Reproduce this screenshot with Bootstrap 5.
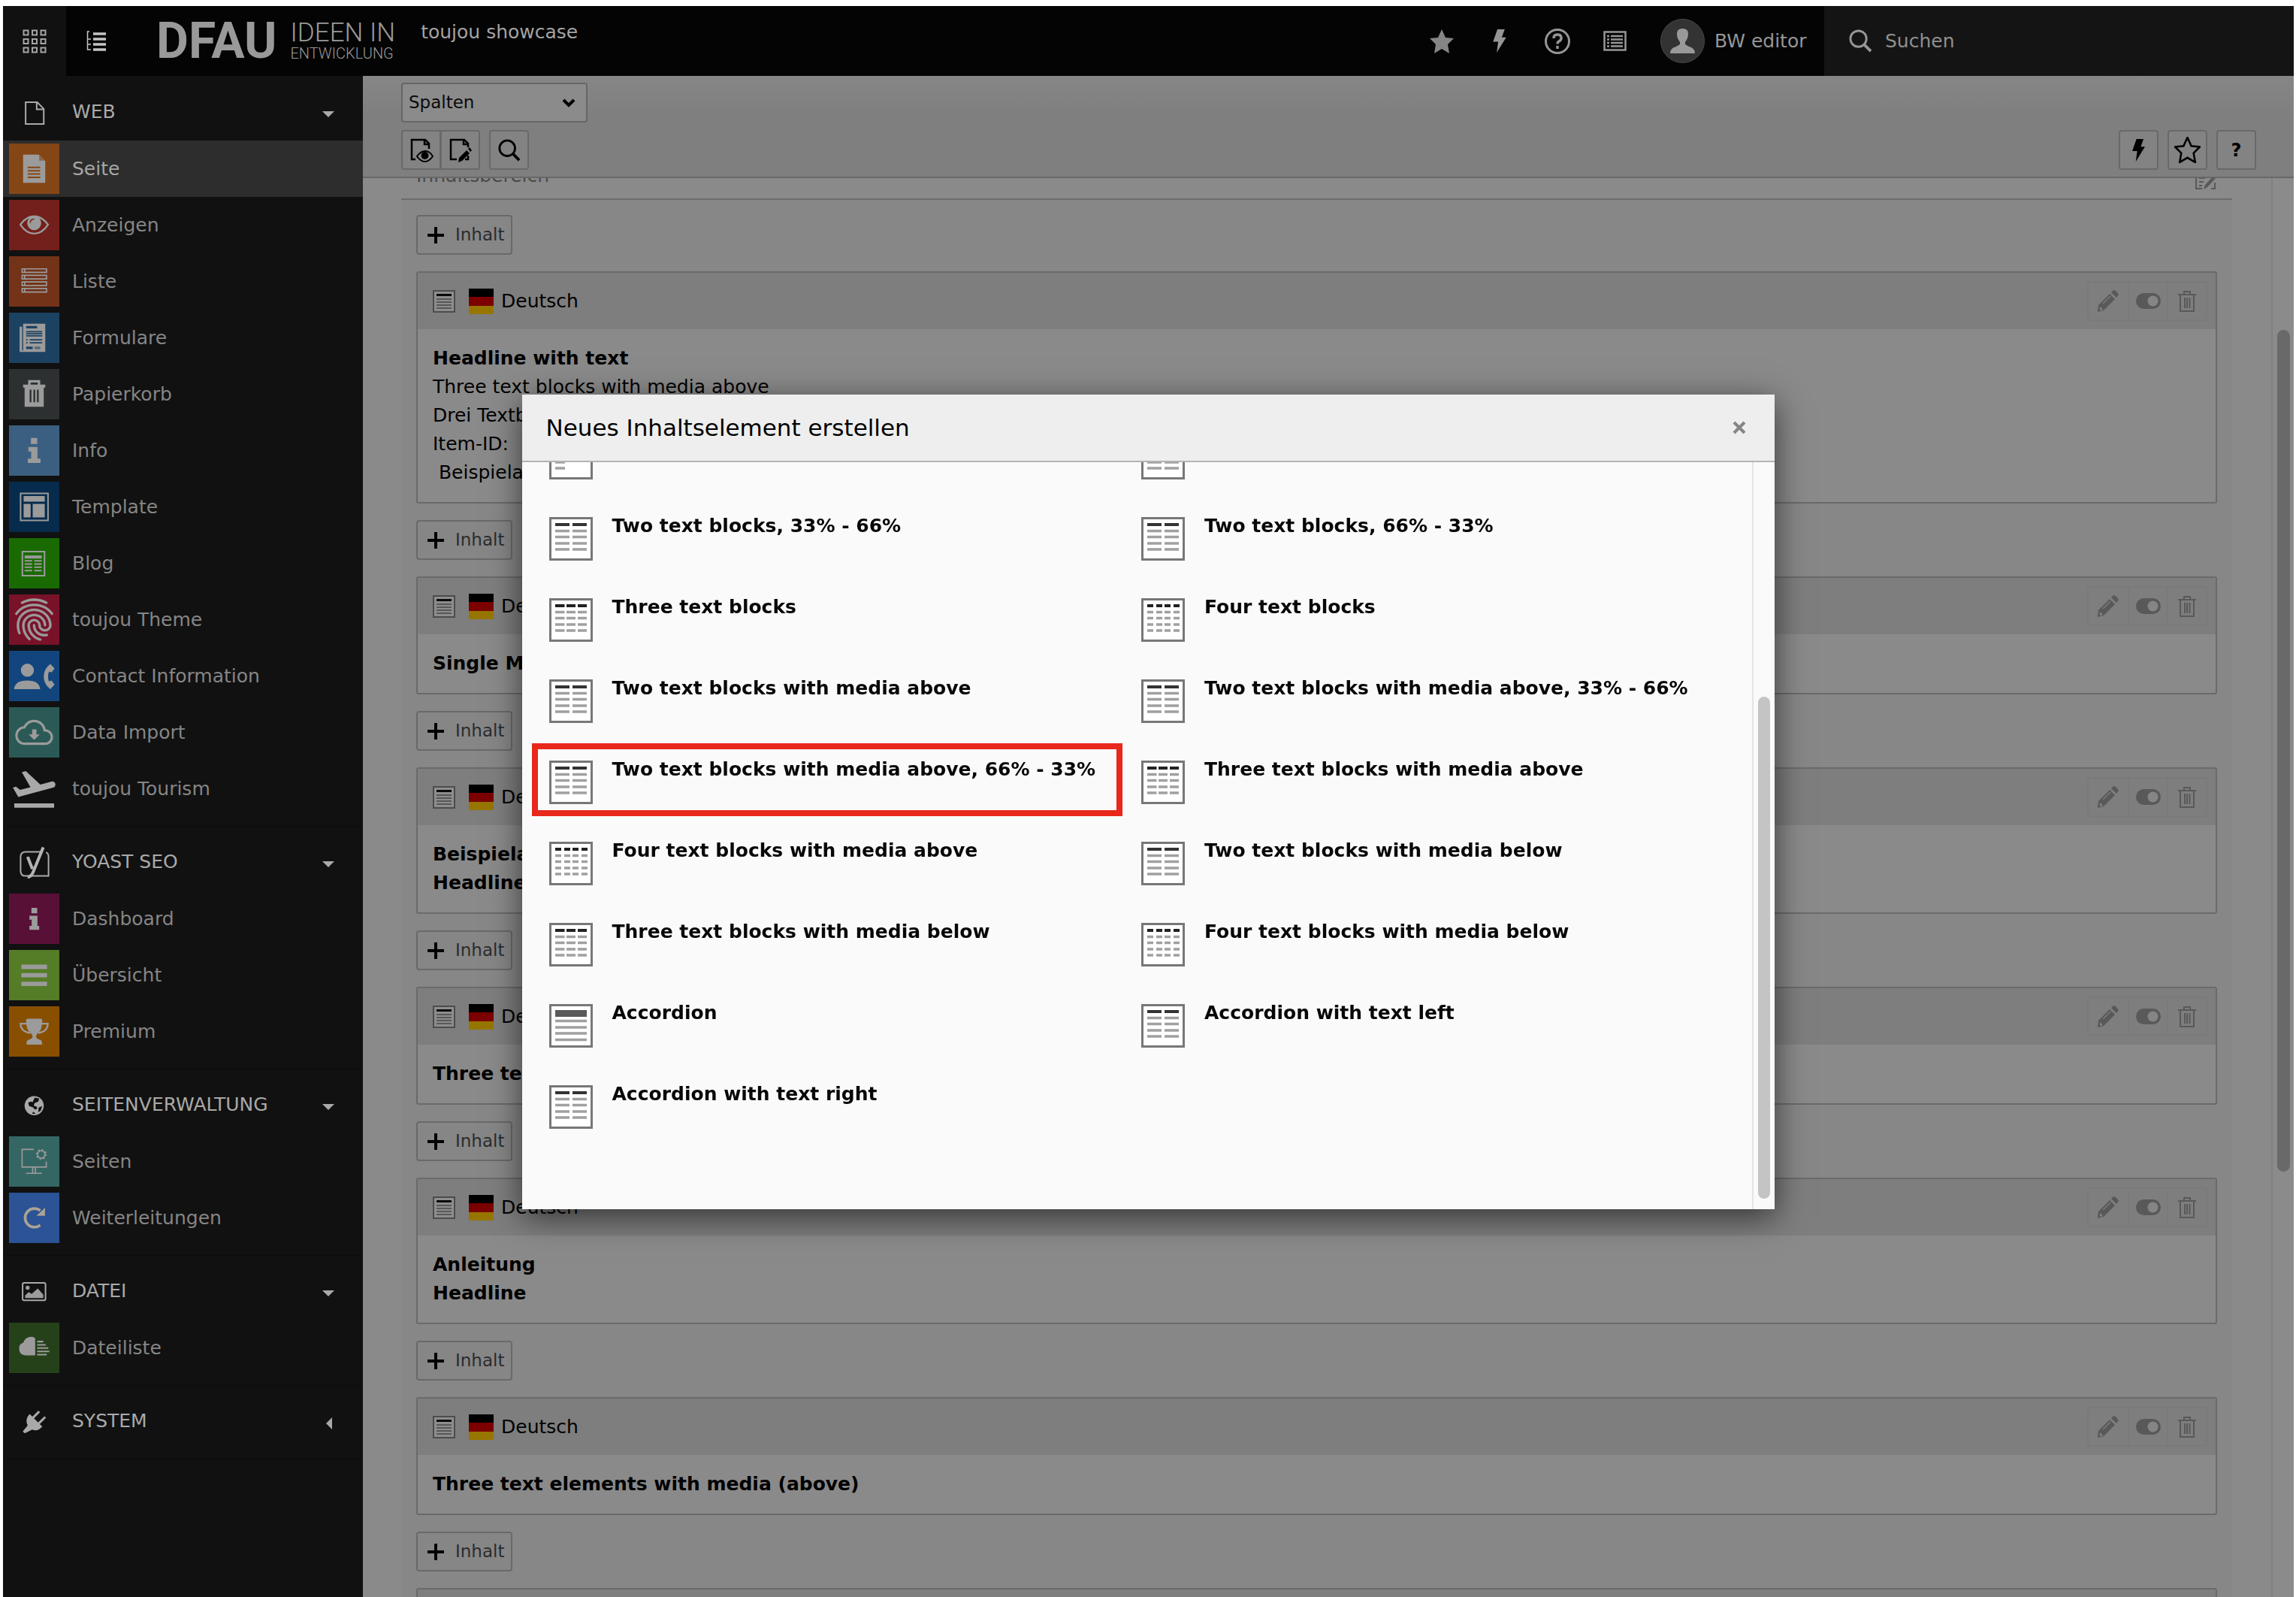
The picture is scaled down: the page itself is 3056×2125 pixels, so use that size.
<!DOCTYPE html>
<html lang="de">
<head>
<meta charset="utf-8">
<meta name="viewport" content="width=device-width, initial-scale=1">
<title>toujou showcase</title>
<link rel="stylesheet" href="https://cdn.jsdelivr.net/npm/bootstrap@5.3.0/dist/css/bootstrap.min.css">
<style>
  html, body { height: 100%; }
  body { font-family: "DejaVu Sans", Verdana, sans-serif; font-size: 25px; line-height: 38px; color: #000; background: #fff; overflow: hidden; }
  svg { display: block; flex: none; }
  .frame { height: 100vh; padding: 8px 3px 0 4px; }

  /* top bar */
  .topbar { height: 93px; flex: none; background: #040404; color: #969696; }
  .topbar button { border: 0; background: none; color: inherit; padding: 0; }
  .topbar .apps-toggle { width: 84px; background: #111; color: #a5a5a5; }
  .topbar .tree-toggle { width: 80px; color: #c4c4c4; }
  .brand { color: #999; text-decoration: none; font-family: Roboto, sans-serif; margin-left: 40px; gap: 18px; }
  .brand-name { font-size: 66px; font-weight: 700; line-height: 66px; }
  .brand-claim { font-size: 35px; font-weight: 300; line-height: 32px; }
  .brand-claim small { font-size: 20px; line-height: 22px; }
  .site-title { margin-left: 34px; color: #a3a3a3; padding-bottom: 24px; }
  .topbar .tool { width: 77px; }
  .topbar .user { width: 240px; gap: 13px; padding-left: 22px; }
  .searchbox { width: 625px; background: #141414; padding-left: 33px; gap: 17px; }
  .searchbox input { background: none; border: 0; padding: 0; color: #969696; font-size: 25px; line-height: 38px; width: 400px; }
  .searchbox input::placeholder { color: #8f8f8f; opacity: 1; }

  /* module menu */
  .modmenu { width: 479px; flex: none; background: #111; overflow: hidden; }
  .modgroup { padding-bottom: 12px; border-bottom: 1px solid #0c0c0c; margin-bottom: -1px; }
  .modhead { width: 100%; height: 86px; padding: 10px 38px 0 8px; border: 0; background: none; color: #a9a9a9; gap: 17px; text-align: left; }
  .modhead .arrow { width: 0; height: 0; margin-top: 6px; border: 8px solid transparent; border-top-color: #a9a9a9; border-bottom: 0; }
  .modhead.closed .arrow { border: 8px solid transparent; border-right-color: #a9a9a9; border-left: 0; margin-right: 3px; }
  .modlink { height: 75px; padding-left: 8px; gap: 17px; color: #858585; text-decoration: none; }
  .modlink.active { background: #2d2d2d; color: #a6a6a6; }
  .modlink:hover { color: #a6a6a6; }
  .tile { width: 67px; height: 67px; fill: #9b9b9b; }

  /* document header */
  .dochead { flex: none; height: 136px; padding: 9px 50px 0 51px; background: linear-gradient(#868686, #7f7f7f 40%, #7f7f7f); border-bottom: 2px solid #686868; gap: 10px; }
  .dochead .form-select { width: 248px; height: 53px; padding: 0 40px 0 8px; border: 2px solid #666; border-radius: 4px; color: #0a0a0a; font-size: 23px;
    background: #8b8b8b url("data:image/svg+xml,%3Csvg xmlns='http://www.w3.org/2000/svg' viewBox='0 0 18 12'%3E%3Cpath d='M2 2l7 7 7-7' fill='none' stroke='%23000' stroke-width='4'/%3E%3C/svg%3E") no-repeat right 14px center / 18px 12px; }
  .tbtn { width: 53px; height: 53px; padding: 0; border: 2px solid #696969; border-radius: 4px; background: #838383; color: #000; font-size: 24px; font-weight: 700; }
  .tbtn:hover { background: #7a7a7a; border-color: #696969; }
  .btn-group .tbtn + .tbtn { margin-left: -2px; }

  /* page content */
  .docbody { background: #8a8a8a; overflow: hidden; }
  .colarea { margin: -22px 52px 0 51px; }
  .colhead { padding: 0 20px 11px; border-bottom: 2px solid #6d6d6d; color: #4a4a4a; }
  .collist { padding: 20px 20px 0; background: #878787; gap: 22px; }
  .addbtn { width: 128px; height: 53px; padding: 0 0 0 13px; border: 2px solid #696969; border-radius: 4px; background: #868686; color: #2c2c2c; font-size: 23px; gap: 15px; }
  .ce { border: 2px solid #6a6a6a; border-radius: 3px; background: #8a8a8a; }
  .ce-head { height: 75px; padding: 0 11px 0 20px; background: #7e7e7e; }
  .ce-flag { margin: 0 10px 0 18px; }
  .ce-body { padding: 20px; }
  .ce-tools { border: 2px solid #7a7a7a; border-radius: 4px; }
  .ce-tools button { width: 52px; height: 49px; padding: 0; border: 0; background: none; color: #595959; }
  .ce-tools button + button { border-left: 2px solid #7a7a7a; }
  .rail { width: 30px; flex: none; border-left: 2px solid #808080; background: #8b8b8b; padding: 202px 0 0 6px; }
  .rail div { width: 17px; height: 1120px; border-radius: 9px; background: #696969; }

  /* dialog */
  .modal.wizard { display: block; top: 8px; height: calc(100% - 8px); overflow: hidden; }
  .wizard .modal-dialog { max-width: 1667px; height: 100%; margin: 0 auto; }
  .wizard .modal-content { height: 1084px; border: 0; border-radius: 0; background: #fafafa; box-shadow: 0 10px 40px rgba(0,0,0,.6); }
  .wizard .modal-header { height: 90px; padding: 0 37px 0 32px; background: #eee; border-bottom: 2px solid #b4b4b4; border-radius: 0; flex: none; }
  .wizard .modal-title { font-size: 31px; line-height: 40px; font-weight: 400; }
  .wizard .closebtn { border: 0; background: none; padding: 0; }
  .wizard .modal-body { padding: 0; overflow: hidden; }
  .wizlist { padding: 0 24px 65px 36px; }
  .wizlist button { height: 108px; padding: 0; border: 0; background: none; gap: 26px; font-size: 25px; line-height: 40px; font-weight: 700; text-align: left; color: #080808; white-space: nowrap; }
  .wizlist svg { margin-top: 8px; }
  .marked { position: relative; }
  .marked::after { content: ""; position: absolute; left: -23px; right: 25px; top: -15px; height: 97px; border: 8px solid #e8281b; }
  .wizrail { width: 30px; flex: none; border-left: 2px solid #e4e4e4; padding: 312px 0 0 6px; }
  .wizrail div { width: 16px; height: 668px; border-radius: 8px; background: #c4c4c4; }
</style>
</head>
<body>

<svg width="0" height="0" class="position-absolute">
  <symbol id="sheet" viewBox="0 0 58 58"><path d="M1.500 1.500h55v55h-55z" fill="#fff" stroke="#777" stroke-width="3"/></symbol>
  <symbol id="w2" viewBox="0 0 58 58"><use href="#sheet"/><path d="M8 10h19M31 10h19" stroke="#333" stroke-width="4"/><path d="M8 18.500h19M31 18.500h19M8 26.500h19M31 26.500h19M8 35h19M31 35h19M8 43h19M31 43h19" stroke="#a0a0a0" stroke-width="3.500"/></symbol>
  <symbol id="w3" viewBox="0 0 58 58"><use href="#sheet"/><path d="M8 10h12.500M23 10h12M38 10h12" stroke="#222" stroke-width="4"/><path d="M8 18.500h12.500m2.500 0h12m3 0h12M8 26.500h12.500m2.500 0h12m3 0h12M8 35h12.500m2.500 0h12m3 0h12M8 43h12.500m2.500 0h12m3 0h12" stroke="#a0a0a0" stroke-width="3.500"/></symbol>
  <symbol id="w4" viewBox="0 0 58 58"><use href="#sheet"/><path d="M8 10h8m4 0h8m3 0h8m4 0h8" stroke="#222" stroke-width="4"/><path d="M8 18.500h8m4 0h8m3 0h8m4 0h8M8 26.500h8m4 0h8m3 0h8m4 0h8M8 35h8m4 0h8m3 0h8m4 0h8M8 43h8m4 0h8m3 0h8m4 0h8" stroke="#a0a0a0" stroke-width="3.500"/></symbol>
  <symbol id="wacc" viewBox="0 0 58 58"><use href="#sheet"/><path d="M8 8h42v9H8z" fill="#5a5a5a"/><path d="M8 22.500h42M8 31h42M8 39h42M8 47.500h42" stroke="#a0a0a0" stroke-width="3.500"/></symbol>
  <symbol id="wside" viewBox="0 0 58 58"><use href="#sheet"/><path d="M8 35h13M8 43h13" stroke="#a0a0a0" stroke-width="3.500"/></symbol>
  <symbol id="cel" viewBox="0 0 30 30"><path d="M1 1h28v28H1z" fill="#8d8d8d" stroke="#4c4c4c" stroke-width="2"/><path d="M5 6.500h20" stroke="#0a0a0a" stroke-width="3"/><path d="M5 12h20M5 16h20M5 20h20M5 24h20" stroke="#585858" stroke-width="2"/></symbol>
  <symbol id="flag" viewBox="0 0 33 34"><path d="M0 0h33v12H0z" fill="#000"/><path d="M0 11h33v12H0z" fill="#7c0000"/><path d="M0 23h33v11H0z" fill="#967600"/></symbol>
  <symbol id="plus" viewBox="0 0 22 22"><path d="M11 0v22M0 11h22" stroke="#000" stroke-width="4"/></symbol>
  <symbol id="pencil" viewBox="0 0 30 30"><path d="M1 29l1-9L17 5l7 7L9 27zM19 3l3-3q2 0 4 2l3 4-3 4z" fill="currentColor"/><path d="M4 22l4 4-4 1z" fill="#858585"/><path d="M8 18L18 8" stroke="#7d7d7d" stroke-width="1.500"/></symbol>
  <symbol id="toggle" viewBox="0 0 33 21"><rect width="33" height="21" rx="10.500" fill="currentColor"/><circle cx="22.500" cy="10.500" r="7" fill="#858585"/></symbol>
  <symbol id="bin" viewBox="0 0 24 30"><path d="M0 6h24M8 6V2h8v4M3 6v22h18V6M9 10v14M12 10v14M15.500 10v14" fill="none" stroke="currentColor" stroke-width="2"/></symbol>
  <symbol id="lens" viewBox="0 0 32 32"><circle cx="13" cy="13" r="11" fill="none" stroke="currentColor" stroke-width="3"/><path d="M21 21l9 9" stroke="currentColor" stroke-width="4"/></symbol>
  <symbol id="bolt" viewBox="0 0 18 32"><path d="M6 0h10l-4 11h6L5 32l2-15H0z" fill="currentColor"/></symbol>
  <symbol id="star" viewBox="0 0 34 34"><path d="M17 1l5 11 11 1-8 8 2 12-10-6-10 6 2-12-8-8 11-1z"/></symbol>
</svg>

<div class="frame d-flex flex-column">
  <header class="topbar d-flex align-items-stretch">
    <button class="apps-toggle d-flex align-items-center justify-content-center" aria-label="Module"><svg width="32" height="32" viewBox="0 0 32 32" fill="none" stroke="currentColor" stroke-width="2"><path d="M1.500 1.500h6v6h-6zM13 1.500h6v6h-6zM24.500 1.500h6v6h-6zM1.500 13h6v6h-6zM13 13h6v6h-6zM24.500 13h6v6h-6zM1.500 24.500h6v6h-6zM13 24.500h6v6h-6zM24.500 24.500h6v6h-6z"/></svg></button>
    <button class="tree-toggle d-flex align-items-center justify-content-center" aria-label="Seitenbaum"><svg width="26" height="27" viewBox="0 0 26 27"><path d="M9 4h17M9 11h17M9 18h17M9 25h17" stroke="currentColor" stroke-width="3.500"/><path d="M4 1H1.500v24H6M1.500 11H6M1.500 18H6" fill="none" stroke="currentColor" stroke-width="1.500"/></svg></button>
    <a class="brand d-flex align-items-center" href="#">
      <span class="brand-name">DFAU</span>
      <span class="brand-claim d-flex flex-column"><span>IDEEN IN</span><small>ENTWICKLUNG</small></span>
    </a>
    <div class="site-title d-flex align-items-center">toujou showcase</div>
    <div class="d-flex align-items-stretch ms-auto">
      <button class="tool d-flex align-items-center justify-content-center" aria-label="Lesezeichen"><svg width="34" height="34" fill="#858585"><use href="#star"/></svg></button>
      <button class="tool d-flex align-items-center justify-content-center" aria-label="Cache"><svg width="18" height="31"><use href="#bolt"/></svg></button>
      <button class="tool d-flex align-items-center justify-content-center" aria-label="Hilfe"><svg width="34" height="34" viewBox="0 0 34 34" fill="none" stroke="currentColor"><circle cx="17" cy="17" r="15.500" stroke-width="3"/><path d="M12 13q0-5 5-5t5 4.500q0 3-3 4.500-2 1-2 3.500M17 23v4" stroke-width="3.500"/></svg></button>
      <button class="tool d-flex align-items-center justify-content-center" aria-label="System"><svg width="31" height="27" viewBox="0 0 31 27" fill="none" stroke="currentColor" stroke-width="2.500"><path d="M1.500 1.500h28v24h-28zM5 7h3M5 11.500h3M5 16h3M5 20.500h3M10 7h16M10 11.500h16M10 16h16M10 20.500h16"/></svg></button>
      <button class="user d-flex align-items-center"><svg width="59" height="59" viewBox="0 0 59 59"><circle cx="29.500" cy="29.500" r="29" fill="#333" stroke="#484848"/><path d="M13 46q0-7 8-9l5-3v-3q-4-5-4-11 0-7 7.500-7t7.500 7q0 6-4 11v3l5 3q8 2 8 9z" fill="#999"/></svg><span>BW editor</span></button>
      <label class="searchbox d-flex align-items-center"><svg width="31" height="31"><use href="#lens"/></svg><input type="text" placeholder="Suchen" aria-label="Suchen"></label>
    </div>
  </header>

  <div class="d-flex flex-grow-1 overflow-hidden">
    <nav class="modmenu">
      <div class="modgroup">
        <button class="modhead d-flex align-items-center"><svg class="tile" viewBox="0 0 200 200"><path d="M66 60h46l26 26v60H66zM110 60v28h28" fill="none" stroke="#a9a9a9" stroke-width="6"/></svg><span class="flex-grow-1">WEB</span><i class="arrow"></i></button>
        <a href="#" class="modlink active d-flex align-items-center"><svg class="tile" viewBox="0 0 200 200"><path fill="#854615" d="M0 0h200v200H0z"/><path d="M56 44h62l26 26v86H56z"/><path d="M120 44v24h24z" fill="#8a6546"/><path d="M74 95h50M74 108h50M74 121h50M74 134h50" stroke="#854615" stroke-width="6"/></svg>Seite</a>
        <a href="#" class="modlink d-flex align-items-center"><svg class="tile" viewBox="0 0 200 200"><path fill="#731f1b" d="M0 0h200v200H0z"/><path d="M45 98q24-33 55-33t55 33q-24 36-55 36T45 98z" fill="none" stroke="#9b9b9b" stroke-width="7"/><circle cx="100" cy="92" r="28"/><path d="M84 92q0-16 16-16" fill="none" stroke="#731f1b" stroke-width="4"/></svg>Anzeigen</a>
        <a href="#" class="modlink d-flex align-items-center"><svg class="tile" viewBox="0 0 200 200"><path fill="#733318" d="M0 0h200v200H0z"/><path d="M52 50h97v14H52zM52 76h97v14H52zM52 102h97v14H52zM52 128h97v14H52zM62 50v14M62 76v14M62 102v14M62 128v14" fill="none" stroke="#9b9b9b" stroke-width="5"/></svg>Liste</a>
        <a href="#" class="modlink d-flex align-items-center"><svg class="tile" viewBox="0 0 200 200"><path fill="#1c4262" d="M0 0h200v200H0z"/><path d="M42 56h10v94h4V44h88v112H42z"/><path d="M68 58h44M68 140h26" stroke="#1c4262" stroke-width="10"/><path d="M68 76h64M68 84h64M68 92h64M68 108h6M82 108h50M68 120h6M82 120h50" stroke="#1c4262" stroke-width="5"/><path d="M102 140h22" stroke="#56687a" stroke-width="10"/></svg>Formulare</a>
        <a href="#" class="modlink d-flex align-items-center"><svg class="tile" viewBox="0 0 200 200"><path fill="#2c3030" d="M0 0h200v200H0z"/><path d="M56 62h20V44h48v18h20v12h-6v76H62V74h-6z"/><path d="M86 54h28v8H86zM82 82h7v50h-7zM97 82h7v50h-7zM111 82h7v50h-7z" fill="#2c3030"/></svg>Papierkorb</a>
        <a href="#" class="modlink d-flex align-items-center"><svg class="tile" viewBox="0 0 200 200"><path fill="#3b5f80" d="M0 0h200v200H0z"/><path d="M87 50h25v24H87zM77 86h36v46h12v17H75v-17h13v-28H77z"/></svg>Info</a>
        <a href="#" class="modlink d-flex align-items-center"><svg class="tile" viewBox="0 0 200 200"><path fill="#062b4c" d="M0 0h200v200H0z"/><path d="M46 46h109v108H46z" fill="none" stroke="#9b9b9b" stroke-width="6"/><path d="M58 57h84v22H58zM58 88h28v54H58zM94 88h48v54H94z"/></svg>Template</a>
        <a href="#" class="modlink d-flex align-items-center"><svg class="tile" viewBox="0 0 200 200"><path fill="#196a00" d="M0 0h200v200H0z"/><path d="M53 54h88v95H53z" fill="none" stroke="#9b9b9b" stroke-width="6"/><path d="M62 69h68v12H62z"/><path d="M62 90h30M100 90h30M62 103h30M100 103h30M62 116h30M100 116h30M62 129h30M100 129h30" stroke="#9b9b9b" stroke-width="6"/></svg>Blog</a>
        <a href="#" class="modlink d-flex align-items-center"><svg class="tile" viewBox="0 0 24 24"><path fill="#781228" d="M0 0h24v24H0z"/><path d="M17.810 4.470c-.08 0-.16-.02-.23-.06C15.660 3.420 14 3 12.010 3c-1.980 0-3.860.47-5.570 1.410-.24.13-.54.04-.68-.2-.13-.24-.04-.55.2-.68C7.820 2.520 9.860 2 12.010 2c2.130 0 3.990.47 6.030 1.520.25.13.34.43.21.67-.09.18-.26.28-.44.28zM3.500 9.720c-.1 0-.2-.03-.29-.09-.23-.16-.28-.47-.12-.7.99-1.400 2.250-2.500 3.750-3.270C9.980 4.040 14 4.030 17.150 5.650c1.500.77 2.760 1.860 3.750 3.250.16.22.11.54-.12.7-.23.16-.54.11-.7-.12-.9-1.260-2.040-2.250-3.390-2.940-2.870-1.470-6.540-1.470-9.400.01-1.360.7-2.500 1.700-3.400 2.960-.08.14-.23.21-.39.21zm6.250 12.070c-.13 0-.26-.05-.35-.15-.87-.87-1.340-1.430-2.010-2.640-.69-1.230-1.050-2.730-1.050-4.340 0-2.970 2.540-5.390 5.660-5.390s5.660 2.420 5.660 5.390c0 .28-.22.5-.5.5s-.5-.22-.5-.5c0-2.420-2.090-4.390-4.660-4.390-2.570 0-4.660 1.970-4.660 4.390 0 1.440.32 2.770.93 3.850.64 1.150 1.080 1.640 1.850 2.420.19.2.19.51 0 .71-.11.1-.24.15-.37.15zm7.170-1.850c-1.190 0-2.240-.3-3.100-.89-1.490-1.010-2.380-2.650-2.380-4.390 0-.28.22-.5.5-.5s.5.22.5.5c0 1.410.72 2.740 1.940 3.560.71.48 1.540.71 2.540.71.24 0 .64-.03 1.040-.1.27-.05.53.13.58.41.05.27-.13.53-.41.58-.57.11-1.070.12-1.210.12zM14.910 22c-.04 0-.09-.01-.13-.02-1.590-.44-2.630-1.030-3.720-2.100-1.400-1.390-2.170-3.240-2.170-5.220 0-1.620 1.380-2.940 3.080-2.940 1.700 0 3.080 1.320 3.080 2.940 0 1.070.93 1.940 2.080 1.940s2.080-.87 2.080-1.940c0-3.770-3.250-6.830-7.250-6.830-2.840 0-5.440 1.580-6.610 4.030-.39.81-.59 1.760-.59 2.800 0 .78.07 2.010.67 3.610.1.26-.03.55-.29.64-.26.1-.55-.04-.64-.29-.49-1.310-.73-2.610-.73-3.960 0-1.200.23-2.290.68-3.240 1.330-2.790 4.280-4.600 7.510-4.600 4.550 0 8.250 3.510 8.250 7.830 0 1.620-1.380 2.940-3.080 2.940s-3.080-1.320-3.080-2.940c0-1.070-.93-1.940-2.080-1.940s-2.080.87-2.080 1.940c0 1.710.66 3.310 1.870 4.510.95.94 1.860 1.460 3.270 1.850.27.07.42.35.35.61-.05.23-.26.38-.47.38z" stroke="#9b9b9b" stroke-width=".2"/></svg>toujou Theme</a>
        <a href="#" class="modlink d-flex align-items-center"><svg class="tile" viewBox="0 0 200 200"><path fill="#12457e" d="M0 0h200v200H0z"/><circle cx="73" cy="77" r="26"/><path d="M20 152q4-34 52-34t52 34z"/><path d="M164 52l17 18-12 16-10-4q-8 20 0 40l10-4 12 16-17 18q-26-20-26-50t26-50z"/></svg>Contact Information</a>
        <a href="#" class="modlink d-flex align-items-center"><svg class="tile" viewBox="0 0 200 200"><path fill="#2b5a56" d="M0 0h200v200H0z"/><path transform="translate(25 25) scale(6.250)" d="M19.350 10.040C18.670 6.590 15.640 4 12 4 9.110 4 6.600 5.640 5.350 8.040 2.340 8.360 0 10.910 0 14c0 3.310 2.690 6 6 6h13c2.760 0 5-2.240 5-5 0-2.640-2.050-4.780-4.650-4.960zM19 18.500H6c-2.210 0-4.500-1.790-4.500-4.500 0-2.050 1.530-4.160 3.860-4.370l.87-.11.4-.75C7.680 6.740 9.840 5.500 12 5.500c2.720 0 5.180 1.960 5.690 4.530l.3 1.400 1.330.11c1.560.1 3.180 1.610 3.180 3.460 0 1.850-1.650 3.500-3.500 3.500z"/><path d="M92 88h17v20h13l-22 22-22-22h14z"/></svg>Data Import</a>
        <a href="#" class="modlink d-flex align-items-center"><svg class="tile" viewBox="0 0 24 24"><path d="M2.500 19h19v2h-19zm19.570-9.360c-.21-.8-1.040-1.280-1.840-1.060L14.920 10l-6.900-6.430-1.930.51 4.140 7.170-4.970 1.330-1.970-1.540-1.450.39 1.820 3.160.77 1.330 1.600-.43 5.310-1.420 4.350-1.160L21 11.490c.81-.23 1.280-1.050 1.070-1.850z" fill="#a8a8a8"/></svg>toujou Tourism</a>
      </div>
      <div class="modgroup">
        <button class="modhead d-flex align-items-center"><svg class="tile" viewBox="0 0 200 200"><path d="M130 58H66q-20 0-20 20v56q0 20 20 20h91V78q0-14-10-18" fill="none" stroke="#a9a9a9" stroke-width="6"/><path d="M74 78l19 48M136 40L96 138q-8 20-22 20" fill="none" stroke="#b4b4b4" stroke-width="12"/></svg><span class="flex-grow-1">YOAST SEO</span><i class="arrow"></i></button>
        <a href="#" class="modlink d-flex align-items-center"><svg class="tile" viewBox="0 0 200 200"><path fill="#581037" d="M0 0h200v200H0z"/><path d="M89 57h23v21H89zM81 88h32v40h7v16H81v-16h9v-24h-9z"/></svg>Dashboard</a>
        <a href="#" class="modlink d-flex align-items-center"><svg class="tile" viewBox="0 0 200 200"><path fill="#557c26" d="M0 0h200v200H0z"/><path d="M49 58h102v18H49zM49 92h102v17H49zM49 126h102v17H49z"/></svg>Übersicht</a>
        <a href="#" class="modlink d-flex align-items-center"><svg class="tile" viewBox="0 0 200 200"><path fill="#884f00" d="M0 0h200v200H0z"/><path d="M68 56q0-7 8-7h48q8 0 8 7 0 36-14 48-11 8-11 16 0 7 12 11 12 3 12 13v8H70v-8q0-10 12-13 12-4 12-11 0-8-11-16-15-12-15-48z"/><path d="M70 69H46q0 32 38 37M130 69h24q0 32-38 37" fill="none" stroke="#9b9b9b" stroke-width="7"/></svg>Premium</a>
      </div>
      <div class="modgroup">
        <button class="modhead d-flex align-items-center"><svg class="tile" viewBox="0 0 200 200"><circle cx="100" cy="102" r="38" fill="#a9a9a9"/><path d="M102 70l18 4-4 12-14 6-4 10 12 4 2 8-8 4-10-10-14-4-4-14 10-4 8 2zM118 110l14-6-6 18-10 6zM96 126l10 8H92z" fill="#111"/></svg><span class="flex-grow-1">SEITENVERWALTUNG</span><i class="arrow"></i></button>
        <a href="#" class="modlink d-flex align-items-center"><svg class="tile" viewBox="0 0 200 200"><path fill="#346763" d="M0 0h200v200H0z"/><path d="M98 52H52v70h96v-22M68 147h63M94 122v25M105 122v25" fill="none" stroke="#9b9b9b" stroke-width="5"/><circle cx="128" cy="72" r="15" fill="none" stroke="#9b9b9b" stroke-width="5"/><circle cx="128" cy="72" r="19" fill="none" stroke="#9b9b9b" stroke-width="5" stroke-dasharray="6 8.900"/></svg>Seiten</a>
        <a href="#" class="modlink d-flex align-items-center"><svg class="tile" viewBox="0 0 200 200"><path fill="#2b5395" d="M0 0h200v200H0z"/><path d="M124 129a37 37 0 1 1 0-58" fill="none" stroke="#aaa294" stroke-width="11"/><path d="M143 60v32h-34z" fill="#aaa294"/></svg>Weiterleitungen</a>
      </div>
      <div class="modgroup">
        <button class="modhead d-flex align-items-center"><svg class="tile" viewBox="0 0 200 200"><rect x="54" y="66" width="91" height="69" rx="6" fill="none" stroke="#a9a9a9" stroke-width="6"/><circle cx="74" cy="85" r="8"/><path d="M64 126v-10l14-14 12 8 24-22 22 24v14z"/></svg><span class="flex-grow-1">DATEI</span><i class="arrow"></i></button>
        <a href="#" class="modlink d-flex align-items-center"><svg class="tile" viewBox="0 0 200 200"><path fill="#25411a" d="M0 0h200v200H0z"/><path d="M104 130H66q-26-2-26-28 0-18 16-22 8-24 34-24 8 0 14 6z"/><path d="M112 75h24M112 88h34M112 101h44M112 114h48M112 127h38" stroke="#9b9b9b" stroke-width="6"/></svg>Dateiliste</a>
      </div>
      <div class="modgroup">
        <button class="modhead closed d-flex align-items-center"><svg class="tile" viewBox="0 0 200 200"><path d="M82 70l50 50q-18 22-40 12l-28 14-8-8 18-22q-12-26 8-46z" fill="#a9a9a9"/><path d="M94 86l26-26M118 108l26-26M58 143l16-16" stroke="#a9a9a9" stroke-width="9"/></svg><span class="flex-grow-1">SYSTEM</span><i class="arrow"></i></button>
      </div>
    </nav>

    <main class="flex-grow-1 d-flex flex-column overflow-hidden">
      <div class="dochead d-flex flex-column">
        <select class="form-select" aria-label="Ansicht"><option>Spalten</option></select>
        <div class="d-flex justify-content-between">
          <div class="d-flex gap-2">
            <div class="btn-group me-1">
              <button class="btn tbtn d-flex align-items-center justify-content-center" aria-label="Anzeigen"><svg width="32" height="32" viewBox="0 0 32 32"><path d="M8 28H3V2h18l5 5v7M20 2v6h6" fill="none" stroke="#000" stroke-width="2.500"/><path d="M10 24q5-7 11-7t10 7q-5 7-10.500 7T10 24z" fill="#8a8a8a" stroke="#000" stroke-width="2"/><circle cx="20.500" cy="23" r="5"/></svg></button>
              <button class="btn tbtn d-flex align-items-center justify-content-center" aria-label="Seite bearbeiten"><svg width="32" height="32" viewBox="0 0 32 32"><path d="M11 28H3V2h18l5 5v5M20 2v6h6M22 28h4v-5" fill="none" stroke="#000" stroke-width="2.500"/><path d="M13 32l1-6 10-10 4 4-10 10zM26 14l2-2 3 4-2 2z"/></svg></button>
            </div>
            <button class="btn tbtn d-flex align-items-center justify-content-center" aria-label="Suche"><svg width="30" height="30"><use href="#lens"/></svg></button>
          </div>
          <div class="d-flex gap-2">
            <button class="btn tbtn d-flex align-items-center justify-content-center me-1" aria-label="Cache leeren"><svg width="17" height="30"><use href="#bolt"/></svg></button>
            <button class="btn tbtn d-flex align-items-center justify-content-center me-1" aria-label="Lesezeichen anlegen"><svg width="35" height="35" fill="none" stroke="#000" stroke-width="2.500"><use href="#star"/></svg></button>
            <button class="btn tbtn d-flex align-items-center justify-content-center">?</button>
          </div>
        </div>
      </div>

      <div class="docbody flex-grow-1 d-flex">
        <div class="flex-grow-1">
          <div class="colarea">
            <div class="colhead d-flex justify-content-between align-items-end"><span>Inhaltsbereich</span><svg width="30" height="32" viewBox="0 0 30 32"><path d="M10 30H2V4h26v4M6 16h8M6 21h6M6 26h4M22 30h5v-8" fill="none" stroke="#585858" stroke-width="2"/><path d="M12 31l2-6L26 12l3 3-12 13z" fill="#585858"/></svg></div>
            <div class="collist d-flex flex-column align-items-start">
              <button class="btn addbtn d-flex align-items-center"><svg width="22" height="22"><use href="#plus"/></svg>Inhalt</button>
              <section class="ce align-self-stretch">
                <div class="ce-head d-flex align-items-center"><svg width="30" height="30"><use href="#cel"/></svg><svg class="ce-flag" width="33" height="34"><use href="#flag"/></svg>Deutsch
                  <div class="ce-tools d-flex ms-auto"><button class="d-flex align-items-center justify-content-center" aria-label="Bearbeiten"><svg width="30" height="30"><use href="#pencil"/></svg></button><button class="d-flex align-items-center justify-content-center" aria-label="Deaktivieren"><svg width="33" height="21"><use href="#toggle"/></svg></button><button class="d-flex align-items-center justify-content-center" aria-label="Löschen"><svg width="24" height="30"><use href="#bin"/></svg></button></div></div>
                <div class="ce-body"><b>Headline with text</b><br>Three text blocks with media above<br>Drei Textb<br>Item-ID:<br>&nbsp;Beispielar</div>
              </section>
              <button class="btn addbtn d-flex align-items-center"><svg width="22" height="22"><use href="#plus"/></svg>Inhalt</button>
              <section class="ce align-self-stretch">
                <div class="ce-head d-flex align-items-center"><svg width="30" height="30"><use href="#cel"/></svg><svg class="ce-flag" width="33" height="34"><use href="#flag"/></svg>Deutsch
                  <div class="ce-tools d-flex ms-auto"><button class="d-flex align-items-center justify-content-center" aria-label="Bearbeiten"><svg width="30" height="30"><use href="#pencil"/></svg></button><button class="d-flex align-items-center justify-content-center" aria-label="Deaktivieren"><svg width="33" height="21"><use href="#toggle"/></svg></button><button class="d-flex align-items-center justify-content-center" aria-label="Löschen"><svg width="24" height="30"><use href="#bin"/></svg></button></div></div>
                <div class="ce-body"><b>Single Me</b></div>
              </section>
              <button class="btn addbtn d-flex align-items-center"><svg width="22" height="22"><use href="#plus"/></svg>Inhalt</button>
              <section class="ce align-self-stretch">
                <div class="ce-head d-flex align-items-center"><svg width="30" height="30"><use href="#cel"/></svg><svg class="ce-flag" width="33" height="34"><use href="#flag"/></svg>Deutsch
                  <div class="ce-tools d-flex ms-auto"><button class="d-flex align-items-center justify-content-center" aria-label="Bearbeiten"><svg width="30" height="30"><use href="#pencil"/></svg></button><button class="d-flex align-items-center justify-content-center" aria-label="Deaktivieren"><svg width="33" height="21"><use href="#toggle"/></svg></button><button class="d-flex align-items-center justify-content-center" aria-label="Löschen"><svg width="24" height="30"><use href="#bin"/></svg></button></div></div>
                <div class="ce-body"><b>Beispielar<br>Headline</b></div>
              </section>
              <button class="btn addbtn d-flex align-items-center"><svg width="22" height="22"><use href="#plus"/></svg>Inhalt</button>
              <section class="ce align-self-stretch">
                <div class="ce-head d-flex align-items-center"><svg width="30" height="30"><use href="#cel"/></svg><svg class="ce-flag" width="33" height="34"><use href="#flag"/></svg>Deutsch
                  <div class="ce-tools d-flex ms-auto"><button class="d-flex align-items-center justify-content-center" aria-label="Bearbeiten"><svg width="30" height="30"><use href="#pencil"/></svg></button><button class="d-flex align-items-center justify-content-center" aria-label="Deaktivieren"><svg width="33" height="21"><use href="#toggle"/></svg></button><button class="d-flex align-items-center justify-content-center" aria-label="Löschen"><svg width="24" height="30"><use href="#bin"/></svg></button></div></div>
                <div class="ce-body"><b>Three tex</b></div>
              </section>
              <button class="btn addbtn d-flex align-items-center"><svg width="22" height="22"><use href="#plus"/></svg>Inhalt</button>
              <section class="ce align-self-stretch">
                <div class="ce-head d-flex align-items-center"><svg width="30" height="30"><use href="#cel"/></svg><svg class="ce-flag" width="33" height="34"><use href="#flag"/></svg>Deutsch
                  <div class="ce-tools d-flex ms-auto"><button class="d-flex align-items-center justify-content-center" aria-label="Bearbeiten"><svg width="30" height="30"><use href="#pencil"/></svg></button><button class="d-flex align-items-center justify-content-center" aria-label="Deaktivieren"><svg width="33" height="21"><use href="#toggle"/></svg></button><button class="d-flex align-items-center justify-content-center" aria-label="Löschen"><svg width="24" height="30"><use href="#bin"/></svg></button></div></div>
                <div class="ce-body"><b>Anleitung<br>Headline</b></div>
              </section>
              <button class="btn addbtn d-flex align-items-center"><svg width="22" height="22"><use href="#plus"/></svg>Inhalt</button>
              <section class="ce align-self-stretch">
                <div class="ce-head d-flex align-items-center"><svg width="30" height="30"><use href="#cel"/></svg><svg class="ce-flag" width="33" height="34"><use href="#flag"/></svg>Deutsch
                  <div class="ce-tools d-flex ms-auto"><button class="d-flex align-items-center justify-content-center" aria-label="Bearbeiten"><svg width="30" height="30"><use href="#pencil"/></svg></button><button class="d-flex align-items-center justify-content-center" aria-label="Deaktivieren"><svg width="33" height="21"><use href="#toggle"/></svg></button><button class="d-flex align-items-center justify-content-center" aria-label="Löschen"><svg width="24" height="30"><use href="#bin"/></svg></button></div></div>
                <div class="ce-body"><b>Three text elements with media (above)</b></div>
              </section>
              <button class="btn addbtn d-flex align-items-center"><svg width="22" height="22"><use href="#plus"/></svg>Inhalt</button>
              <section class="ce align-self-stretch"><div class="ce-head"></div></section>
            </div>
          </div>
        </div>
        <div class="rail"><div></div></div>
      </div>
    </main>
  </div>
</div>

<div class="modal wizard" role="dialog" aria-labelledby="wizard-title">
  <div class="modal-dialog d-flex align-items-center">
    <div class="modal-content">
      <div class="modal-header d-flex align-items-center justify-content-between">
        <h4 class="modal-title" id="wizard-title">Neues Inhaltselement erstellen</h4>
        <button class="closebtn" aria-label="Schließen"><svg width="20" height="20" viewBox="0 0 20 20"><path d="M3 3l14 14M17 3L3 17" stroke="#858585" stroke-width="4"/></svg></button>
      </div>
      <div class="modal-body d-flex">
        <div class="flex-grow-1 d-flex flex-column justify-content-end">
          <div class="wizlist row g-0">
            <button class="col-6 d-flex align-items-start" aria-hidden="true"><svg width="58" height="58"><use href="#wside"/></svg></button>
            <button class="col-6 d-flex align-items-start" aria-hidden="true"><svg width="58" height="58"><use href="#w2"/></svg></button>
            <button class="col-6 d-flex align-items-start"><svg width="58" height="58"><use href="#w2"/></svg>Two text blocks, 33% - 66%</button>
            <button class="col-6 d-flex align-items-start"><svg width="58" height="58"><use href="#w2"/></svg>Two text blocks, 66% - 33%</button>
            <button class="col-6 d-flex align-items-start"><svg width="58" height="58"><use href="#w3"/></svg>Three text blocks</button>
            <button class="col-6 d-flex align-items-start"><svg width="58" height="58"><use href="#w4"/></svg>Four text blocks</button>
            <button class="col-6 d-flex align-items-start"><svg width="58" height="58"><use href="#w2"/></svg>Two text blocks with media above</button>
            <button class="col-6 d-flex align-items-start"><svg width="58" height="58"><use href="#w2"/></svg>Two text blocks with media above, 33% - 66%</button>
            <button class="col-6 d-flex align-items-start marked"><svg width="58" height="58"><use href="#w2"/></svg>Two text blocks with media above, 66% - 33%</button>
            <button class="col-6 d-flex align-items-start"><svg width="58" height="58"><use href="#w3"/></svg>Three text blocks with media above</button>
            <button class="col-6 d-flex align-items-start"><svg width="58" height="58"><use href="#w4"/></svg>Four text blocks with media above</button>
            <button class="col-6 d-flex align-items-start"><svg width="58" height="58"><use href="#w2"/></svg>Two text blocks with media below</button>
            <button class="col-6 d-flex align-items-start"><svg width="58" height="58"><use href="#w3"/></svg>Three text blocks with media below</button>
            <button class="col-6 d-flex align-items-start"><svg width="58" height="58"><use href="#w4"/></svg>Four text blocks with media below</button>
            <button class="col-6 d-flex align-items-start"><svg width="58" height="58"><use href="#wacc"/></svg>Accordion</button>
            <button class="col-6 d-flex align-items-start"><svg width="58" height="58"><use href="#w2"/></svg>Accordion with text left</button>
            <button class="col-6 d-flex align-items-start"><svg width="58" height="58"><use href="#w2"/></svg>Accordion with text right</button>
          </div>
        </div>
        <div class="wizrail"><div></div></div>
      </div>
    </div>
  </div>
</div>

<script src="https://cdn.jsdelivr.net/npm/bootstrap@5.3.0/dist/js/bootstrap.bundle.min.js"></script>
</body>
</html>
